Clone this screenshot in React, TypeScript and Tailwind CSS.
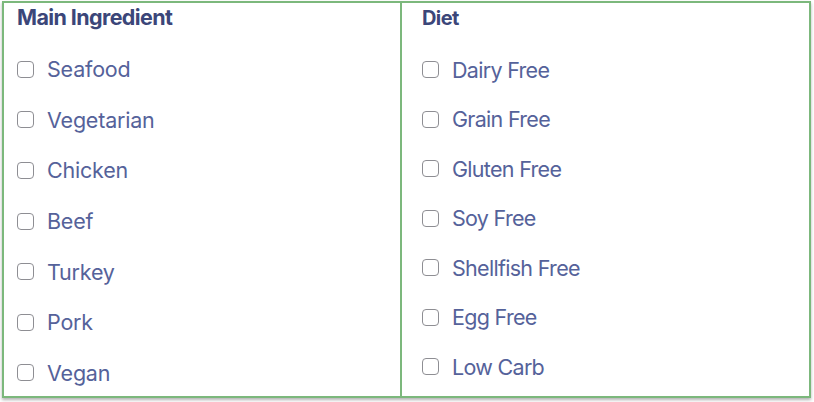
import { useState } from "react";

const mainIngredients = ["Seafood", "Vegetarian", "Chicken", "Beef", "Turkey", "Pork", "Vegan"];
const diets = ["Dairy Free", "Grain Free", "Gluten Free", "Soy Free", "Shellfish Free", "Egg Free", "Low Carb"];

function CheckRow({ label, rowClass, tight }: { label: string; rowClass: string; tight?: boolean }) {
  const [checked, setChecked] = useState(false);
  return (
    <label className={`flex items-center cursor-pointer ${rowClass}`}>
      <span
        onClick={() => setChecked(!checked)}
        className={`w-[17px] h-[17px] rounded-[4px] border-[1.5px] border-[#8e8e93] shrink-0 ${checked ? "bg-[#56639a]" : "bg-white"}`}
      />
      <span
        className={`text-[#55629a] ml-[13px] ${tight ? "text-[21.5px] tracking-[-0.7px]" : "text-[21.5px] tracking-[-0.2px]"}`}
      >
        {label}
      </span>
    </label>
  );
}

export default function App() {
  return (
    <div className="w-[814px] h-[402px] bg-white font-['Inter',sans-serif]">
      <div className="ml-[2px] mt-[1px] w-[809px] h-[397px] flex border-2 border-[color:#7cb87c] shadow-[0_2px_3px_rgba(0,0,0,0.3)]">
        <div className="w-[398px] border-r-2 border-[color:#7cb87c] pl-[13px]">
          <h3 className="mt-[1px] h-[26px] leading-[26px] text-[21.5px] font-bold text-[#3b4679] tracking-[-0.6px]">
            Main Ingredient
          </h3>
          <div className="mt-[14px]">
            {mainIngredients.map((m) => (
              <CheckRow key={m} label={m} rowClass="h-[50.6px]" />
            ))}
          </div>
        </div>
        <div className="flex-1 pl-[20px]">
          <h3 className="mt-[2px] h-[26px] leading-[26px] text-[20px] font-bold text-[#3b4679] tracking-[-0.6px]">
            Diet
          </h3>
          <div className="mt-[14px]">
            {diets.map((d) => (
              <CheckRow key={d} label={d} rowClass="h-[49.5px]" tight />
            ))}
          </div>
        </div>
      </div>
    </div>
  );
}
